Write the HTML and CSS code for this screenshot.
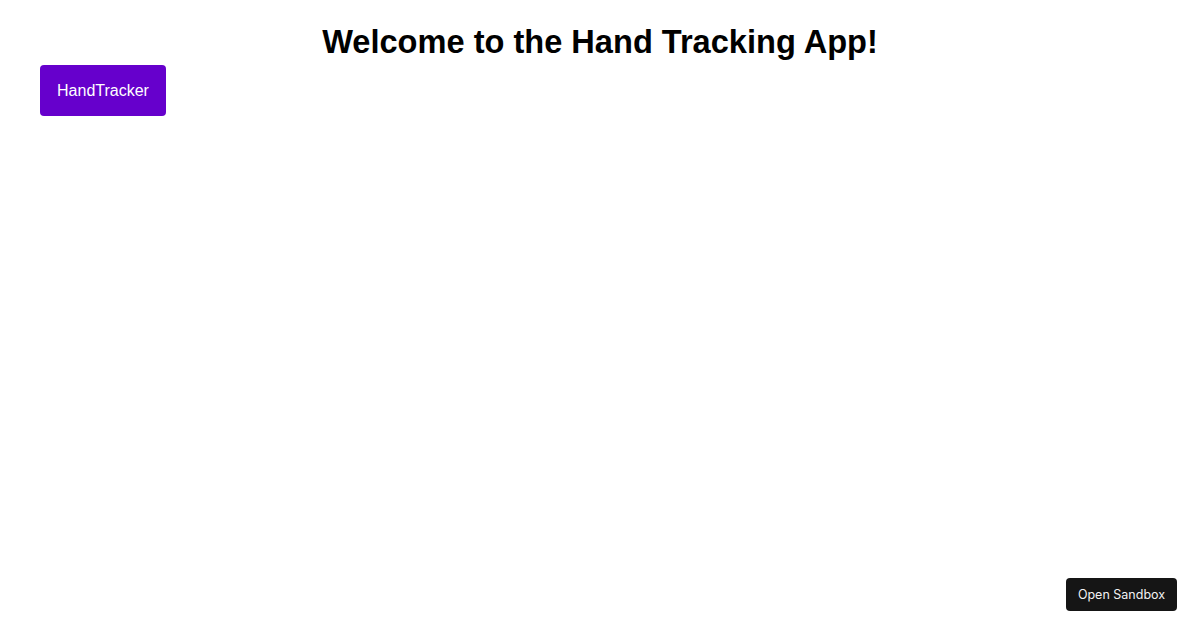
FILE: index.html
```html
<!DOCTYPE html>
<html lang="en">
<head>
    <meta charset="UTF-8">
    <meta name="viewport" content="width=device-width, initial-scale=1.0">
    <title>Hand Tracking App</title>
    <link rel="stylesheet" href="styles.css">
</head>
<body>
    <div class="app">
        <h1>Welcome to the Hand Tracking App!</h1>
        <div class="toolbar">
            <button class="tracker-btn">HandTracker</button>
        </div>
    </div>
    <a class="sandbox-badge" href="#">Open Sandbox</a>
</body>
</html>
```

FILE: styles.css
```css
body {
    margin: 0;
    font-family: 'Liberation Sans', Arial, sans-serif;
    background: #ffffff;
    color: #000000;
}
.app {
    padding-top: 23px;
}
h1 {
    margin: 0;
    font-size: 32.6px;
    line-height: 37px;
    text-align: center;
}
.toolbar {
    display: flex;
    padding: 5px 40px 0;
}
.tracker-btn {
    width: 126px;
    height: 51px;
    background: #6600cc;
    color: white;
    border: none;
    border-radius: 4px;
    font-family: 'Liberation Sans', Arial, sans-serif;
    font-size: 16px;
    cursor: pointer;
}
.sandbox-badge {
    position: fixed;
    right: 23px;
    bottom: 19px;
    width: 111px;
    height: 33px;
    display: flex;
    align-items: center;
    justify-content: center;
    background: #151515;
    color: #f2f2f2;
    border-radius: 4px;
    font-family: Inter, 'Liberation Sans', sans-serif;
    font-size: 12.5px;
    text-decoration: none;
}
```
